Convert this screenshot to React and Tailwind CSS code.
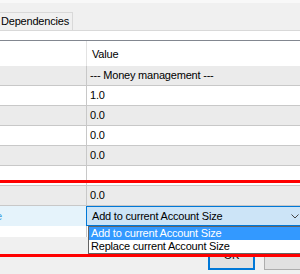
import React from "react";

function Row({ bg, children }) {
  return (
    <div className={`h-[20px] flex border-b border-[#c8c8c8] ${bg}`}>
      <div className="w-[87px] h-full border-r border-[#c8c8c8]" />
      <div className="flex-1 flex items-center pl-[3px]">{children}</div>
    </div>
  );
}

export default function App() {
  return (
    <div className="relative w-[300px] h-[274px] overflow-hidden bg-[#f0f0f0] font-['Liberation_Sans',Arial,sans-serif] text-[11px] tracking-[-0.2px] text-black">
      <div className="w-[312px] flex flex-col h-full">
        <div className="h-[3px] bg-[#f8f8f8]" />
        <div className="h-[28px] flex items-end border-b border-[#d9d9d9]">
          <div className="h-[18px] w-[73px] border-t border-r border-[#d9d9d9] flex items-center pl-[1px] leading-none">
            Dependencies
          </div>
        </div>
        <div className="h-[9px] bg-white" />
        <div className="border-t border-[#828790] bg-white">
          <div className="h-[25px] flex">
            <div className="w-[87px] h-full border-r border-[#e3e3e3]" />
            <div className="flex-1 flex items-center pl-[5px] pt-[1px]">Value</div>
          </div>
          <Row bg="bg-[#ebebeb]">--- Money management ---</Row>
          <Row bg="bg-white">1.0</Row>
          <Row bg="bg-[#ebebeb]">0.0</Row>
          <Row bg="bg-white">0.0</Row>
          <Row bg="bg-[#ebebeb]">0.0</Row>
          <Row bg="bg-white"></Row>
          <Row bg="bg-[#ebebeb]">0.0</Row>
          <div className="h-[20px] flex">
            <div className="w-[86px] h-full bg-[#e5f3fb] flex items-center overflow-hidden">
              <span className="-ml-[4px] text-[#3ea0e0]">e</span>
            </div>
            <div className="flex-1 h-full border border-[#0078d7] bg-[#cce4f7] flex items-center pl-[5px]">
              <span>Add to current Account Size</span>
              <svg className="ml-auto mr-[12px]" width="8" height="5" viewBox="0 0 8 5">
                <polyline points="0.5,0.5 4,4 7.5,0.5" fill="none" stroke="#444" strokeWidth="1" />
              </svg>
            </div>
          </div>
          <div className="h-[11px] flex bg-white">
            <div className="w-[87px] h-full border-r border-[#c8c8c8]" />
          </div>
        </div>
        <div className="flex-1 flex pl-[208px] pt-[3px] gap-[9px] items-start">
          <div className="w-[72px] h-[30px] border-2 border-[#0078d7] bg-[#e1e1e1] flex items-center justify-center">
            OK
          </div>
          <div className="w-[75px] h-[30px] border border-[#adadad] bg-[#e1e1e1]" />
        </div>
      </div>

      <div className="absolute top-[226px] left-[88px] w-[220px] border border-[#646464] bg-white">
        <div className="h-[13px] flex items-center pl-[2px] bg-[#3399ff] text-white">
          Add to current Account Size
        </div>
        <div className="h-[13px] flex items-center pl-[2px]">Replace current Account Size</div>
      </div>

      <div className="absolute left-[-10px] w-[330px] top-[180px] h-[77px] border-[3px] border-[#ff0000]" />
    </div>
  );
}
